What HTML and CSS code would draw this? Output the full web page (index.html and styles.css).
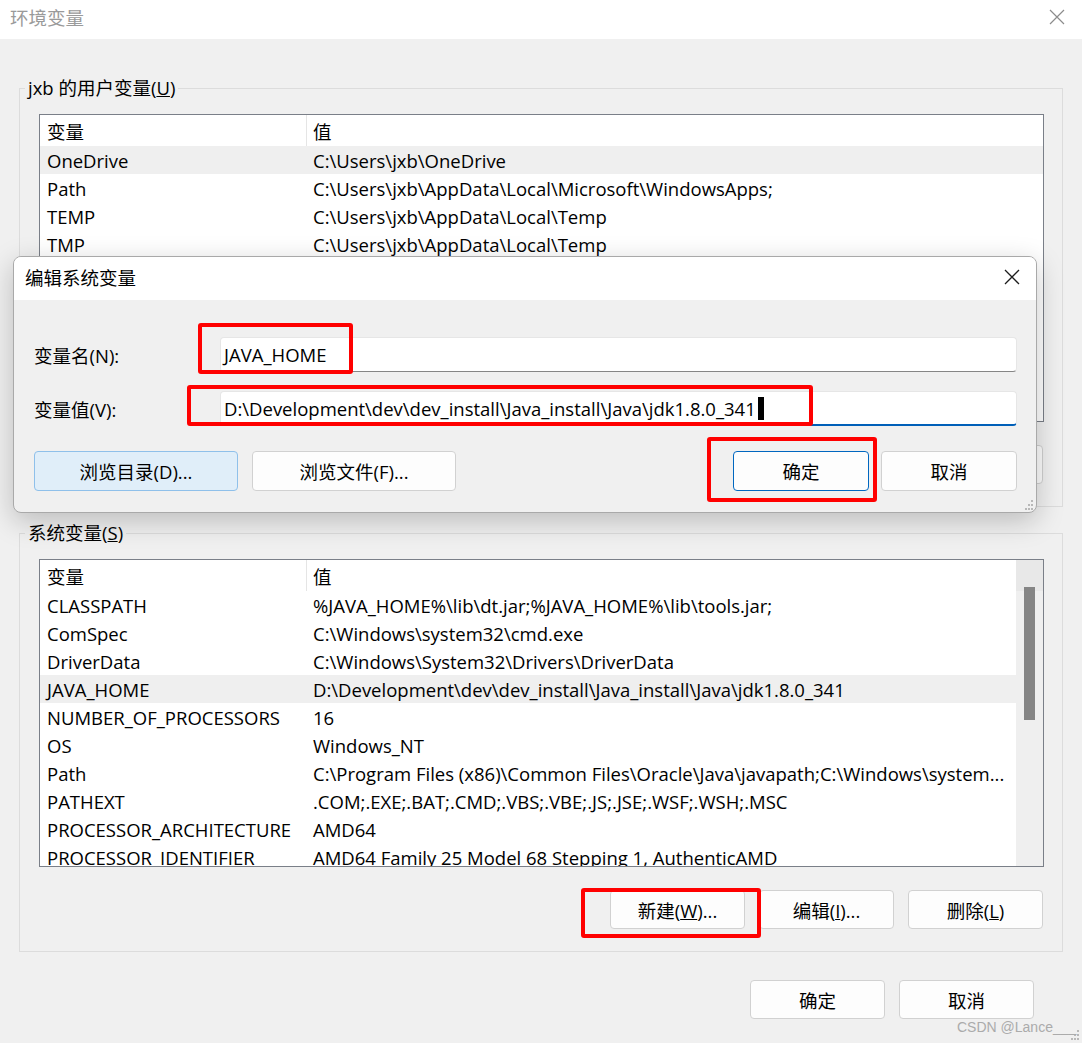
FILE: index.html
```html
<!DOCTYPE html>
<html lang="zh-CN">

<head>
    <meta charset="UTF-8">
    <meta name="viewport" content="width=device-width, initial-scale=1.0">
    <title>环境变量</title>
    <link rel="stylesheet" href="styles.css">
</head>

<body>
    <div class="window">
        <div class="titlebar">
            <span class="title">环境变量</span>
            <svg class="close close-inactive" width="16" height="16" viewBox="0 0 16 16">
                <path d="M1 1 15 15M15 1 1 15" stroke="currentColor" stroke-width="1.2" fill="none" />
            </svg>
        </div>

        <div class="content">
            <fieldset class="group">
                <legend>jxb 的用户变量(<u>U</u>)</legend>
                <div class="list">
                    <div class="list-main">
                        <div class="list-head"><span class="cell">变量</span><span class="cell cell-value">值</span></div>
                        <div class="row selected"><span class="cell">OneDrive</span><span class="cell">C:\Users\jxb\OneDrive</span></div>
                        <div class="row"><span class="cell">Path</span><span class="cell">C:\Users\jxb\AppData\Local\Microsoft\WindowsApps;</span></div>
                        <div class="row"><span class="cell">TEMP</span><span class="cell">C:\Users\jxb\AppData\Local\Temp</span></div>
                        <div class="row"><span class="cell">TMP</span><span class="cell">C:\Users\jxb\AppData\Local\Temp</span></div>
                    </div>
                </div>
                <!-- 被对话框挡住的按钮，只露出右边一点 -->
                <div class="btn-row">
                    <button class="btn"></button>
                    <button class="btn"></button>
                    <button class="btn"></button>
                </div>
            </fieldset>

            <fieldset class="group group-system">
                <legend>系统变量(<u>S</u>)</legend>
                <div class="list">
                    <div class="list-main">
                        <div class="list-head"><span class="cell">变量</span><span class="cell cell-value">值</span></div>
                        <div class="row"><span class="cell">CLASSPATH</span><span class="cell">%JAVA_HOME%\lib\dt.jar;%JAVA_HOME%\lib\tools.jar;</span></div>
                        <div class="row"><span class="cell">ComSpec</span><span class="cell">C:\Windows\system32\cmd.exe</span></div>
                        <div class="row"><span class="cell">DriverData</span><span class="cell">C:\Windows\System32\Drivers\DriverData</span></div>
                        <div class="row selected"><span class="cell">JAVA_HOME</span><span class="cell">D:\Development\dev\dev_install\Java_install\Java\jdk1.8.0_341</span></div>
                        <div class="row"><span class="cell">NUMBER_OF_PROCESSORS</span><span class="cell">16</span></div>
                        <div class="row"><span class="cell">OS</span><span class="cell">Windows_NT</span></div>
                        <div class="row"><span class="cell">Path</span><span class="cell">C:\Program Files (x86)\Common Files\Oracle\Java\javapath;C:\Windows\system...</span></div>
                        <div class="row"><span class="cell">PATHEXT</span><span class="cell">.COM;.EXE;.BAT;.CMD;.VBS;.VBE;.JS;.JSE;.WSF;.WSH;.MSC</span></div>
                        <div class="row"><span class="cell">PROCESSOR_ARCHITECTURE</span><span class="cell">AMD64</span></div>
                        <div class="row"><span class="cell">PROCESSOR_IDENTIFIER</span><span class="cell">AMD64 Family 25 Model 68 Stepping 1, AuthenticAMD</span></div>
                    </div>
                    <div class="scrollbar">
                        <div class="scroll-head"></div>
                        <div class="scroll-thumb"></div>
                    </div>
                </div>
                <div class="btn-row">
                    <button class="btn">新建(<u>W</u>)...</button>
                    <button class="btn">编辑(<u>I</u>)...</button>
                    <button class="btn">删除(<u>L</u>)</button>
                </div>
            </fieldset>

            <div class="footer">
                <button class="btn">确定</button>
                <button class="btn">取消</button>
            </div>
        </div>

        <svg class="grip grip-window" width="12" height="12" viewBox="0 0 12 12" fill="#b8b8b8">
            <rect x="9" y="1" width="2" height="2" />
            <rect x="6" y="5" width="2" height="2" /><rect x="9" y="5" width="2" height="2" />
            <rect x="3" y="9" width="2" height="2" /><rect x="6" y="9" width="2" height="2" /><rect x="9" y="9" width="2" height="2" />
        </svg>
        <div class="watermark">CSDN @Lance___</div>
    </div>

    <!-- 编辑系统变量 对话框 -->
    <div class="dialog">
        <div class="dlg-title">
            <span>编辑系统变量</span>
            <svg class="close" width="16" height="16" viewBox="0 0 16 16">
                <path d="M1 1 15 15M15 1 1 15" stroke="currentColor" stroke-width="1.3" fill="none" />
            </svg>
        </div>
        <div class="dlg-body">
            <div class="form">
                <label>变量名(N):</label>
                <div class="field">JAVA_HOME</div>
                <label>变量值(V):</label>
                <div class="field focused">D:\Development\dev\dev_install\Java_install\Java\jdk1.8.0_341<span class="caret"></span></div>
            </div>
            <div class="dlg-buttons">
                <button class="btn btn-wide btn-hover">浏览目录(D)...</button>
                <button class="btn btn-wide">浏览文件(F)...</button>
                <span class="spacer"></span>
                <button class="btn btn-dlg btn-default">确定</button>
                <button class="btn btn-dlg">取消</button>
            </div>
        </div>
        <svg class="grip grip-dialog" width="12" height="12" viewBox="0 0 12 12" fill="#b8b8b8">
            <rect x="9" y="1" width="2" height="2" />
            <rect x="6" y="5" width="2" height="2" /><rect x="9" y="5" width="2" height="2" />
            <rect x="3" y="9" width="2" height="2" /><rect x="6" y="9" width="2" height="2" /><rect x="9" y="9" width="2" height="2" />
        </svg>
    </div>

    <!-- 红框标注 -->
    <div class="mark mark-name"></div>
    <div class="mark mark-value"></div>
    <div class="mark mark-ok"></div>
    <div class="mark mark-new"></div>
</body>

</html>
```

FILE: styles.css
```css
* {
    box-sizing: border-box;
}

body {
    margin: 0;
    width: 1082px;
    height: 1043px;
    position: relative;
    overflow: hidden;
    font-family: "Open Sans", "Noto Sans CJK SC", sans-serif;
    font-size: 18.5px;
    color: #000;
    background-color: #f0f0f0;
}

button {
    font: inherit;
    color: inherit;
}

.window {
    width: 100%;
    height: 100%;
    display: flex;
    flex-direction: column;
    background-color: #f0f0f0;
}

.titlebar {
    height: 39px;
    flex: none;
    background-color: #fff;
    display: flex;
    align-items: center;
    padding: 0 17px 5px 10px;
}

.title {
    color: #9a9a9a;
    flex: 1;
}

.close {
    color: #1c1c1c;
}

.close-inactive {
    color: #8c8c8c;
}

.content {
    display: flex;
    flex-direction: column;
}

.group {
    margin: 37px 19px 0 19px;
    padding: 14px 18px 22px 19px;
    border: 1px solid #dcdcdc;
    min-width: 0;
}

.group legend {
    padding: 0 3px;
    margin-left: -14px;
    line-height: 24px;
}

.group-system {
    margin-top: 14px;
}

.list {
    height: 308px;
    border: 1px solid #7a7f88;
    background-color: #fff;
    display: flex;
    overflow: hidden;
}

.list-main {
    flex: 1;
    min-width: 0;
}

.list-head,
.row {
    display: grid;
    grid-template-columns: 266px 1fr;
    white-space: nowrap;
}

.list-head {
    height: 31px;
    align-items: stretch;
}

.list-head .cell {
    display: flex;
    align-items: center;
}

.cell-value {
    border-left: 1px solid #e5e5e5;
    padding-left: 6px !important;
}

.row {
    height: 28px;
    align-items: center;
}

.cell {
    padding-left: 7px;
    overflow: hidden;
}

.selected {
    background-color: #efefef;
}

.scrollbar {
    width: 27px;
    background-color: #efefef;
}

.scroll-head {
    height: 31px;
    background-color: #e8e8e8;
}

.scroll-thumb {
    width: 11px;
    height: 133px;
    margin: -4px 0 0 8px;
    background-color: #858585;
}

.btn-row {
    display: flex;
    justify-content: flex-end;
    gap: 14px;
    margin-top: 23px;
    padding-right: 1px;
}

.btn {
    width: 135px;
    height: 39px;
    border: 1px solid #d1d1d1;
    border-radius: 4px;
    background-color: #fdfdfd;
    padding: 0;
}

.footer {
    display: flex;
    justify-content: flex-end;
    gap: 14px;
    margin-top: 28px;
    padding-right: 48px;
}

.grip {
    position: absolute;
}

.grip-window {
    right: 2px;
    bottom: 2px;
}

.watermark {
    position: absolute;
    left: 957px;
    top: 1018px;
    white-space: nowrap;
    font-family: "Liberation Sans", sans-serif;
    font-size: 14px;
    line-height: 18px;
    color: #ababab;
}

/* 编辑系统变量 */
.dialog {
    position: absolute;
    left: 13px;
    top: 256px;
    width: 1024px;
    height: 257px;
    border: 1px solid #a9a9a9;
    border-radius: 8px;
    background-color: #f0f0f0;
    box-shadow: 0 8px 28px rgba(0, 0, 0, 0.22);
    overflow: hidden;
}

.dlg-title {
    height: 43px;
    background-color: #fff;
    display: flex;
    align-items: center;
    justify-content: space-between;
    padding: 0 16px 3px 11px;
}

.dlg-body {
    padding: 37px 19px 21px 20px;
}

.form {
    display: grid;
    grid-template-columns: 186px 1fr;
    row-gap: 19px;
    align-items: center;
}

.form label {
    padding-top: 1px;
}

.field {
    height: 35px;
    background-color: #fff;
    border: 1px solid #e6e6e6;
    border-bottom: 1px solid #868686;
    border-radius: 4px;
    padding-left: 3px;
    display: flex;
    align-items: center;
    white-space: nowrap;
}

.field.focused {
    border-bottom: 2px solid #005fb8;
    padding-top: 1px;
}

.caret {
    display: inline-block;
    width: 6px;
    height: 23px;
    background-color: #000;
    margin-left: 2px;
}

.dlg-buttons {
    display: flex;
    gap: 14px;
    margin-top: 25px;
}

.spacer {
    flex: 1;
}

.btn-wide {
    width: 204px;
    height: 40px;
}

.btn-dlg {
    width: 136px;
    height: 40px;
}

.dlg-buttons .btn-dlg + .btn-dlg {
    margin-left: -2px;
}

.btn-hover {
    background-color: #e0eef9;
    border-color: #8fc0ea;
}

.btn-default {
    border-color: #0067c0;
}

.grip-dialog {
    right: 2px;
    bottom: 1px;
}

/* 红框 */
.mark {
    position: absolute;
    border: 4px solid #ff0000;
    border-radius: 3px;
}

.mark-name {
    left: 198px;
    top: 323px;
    width: 155px;
    height: 51px;
}

.mark-value {
    left: 187px;
    top: 385px;
    width: 626px;
    height: 41px;
}

.mark-ok {
    left: 707px;
    top: 437px;
    width: 170px;
    height: 65px;
}

.mark-new {
    left: 581px;
    top: 888px;
    width: 180px;
    height: 50px;
}
```
